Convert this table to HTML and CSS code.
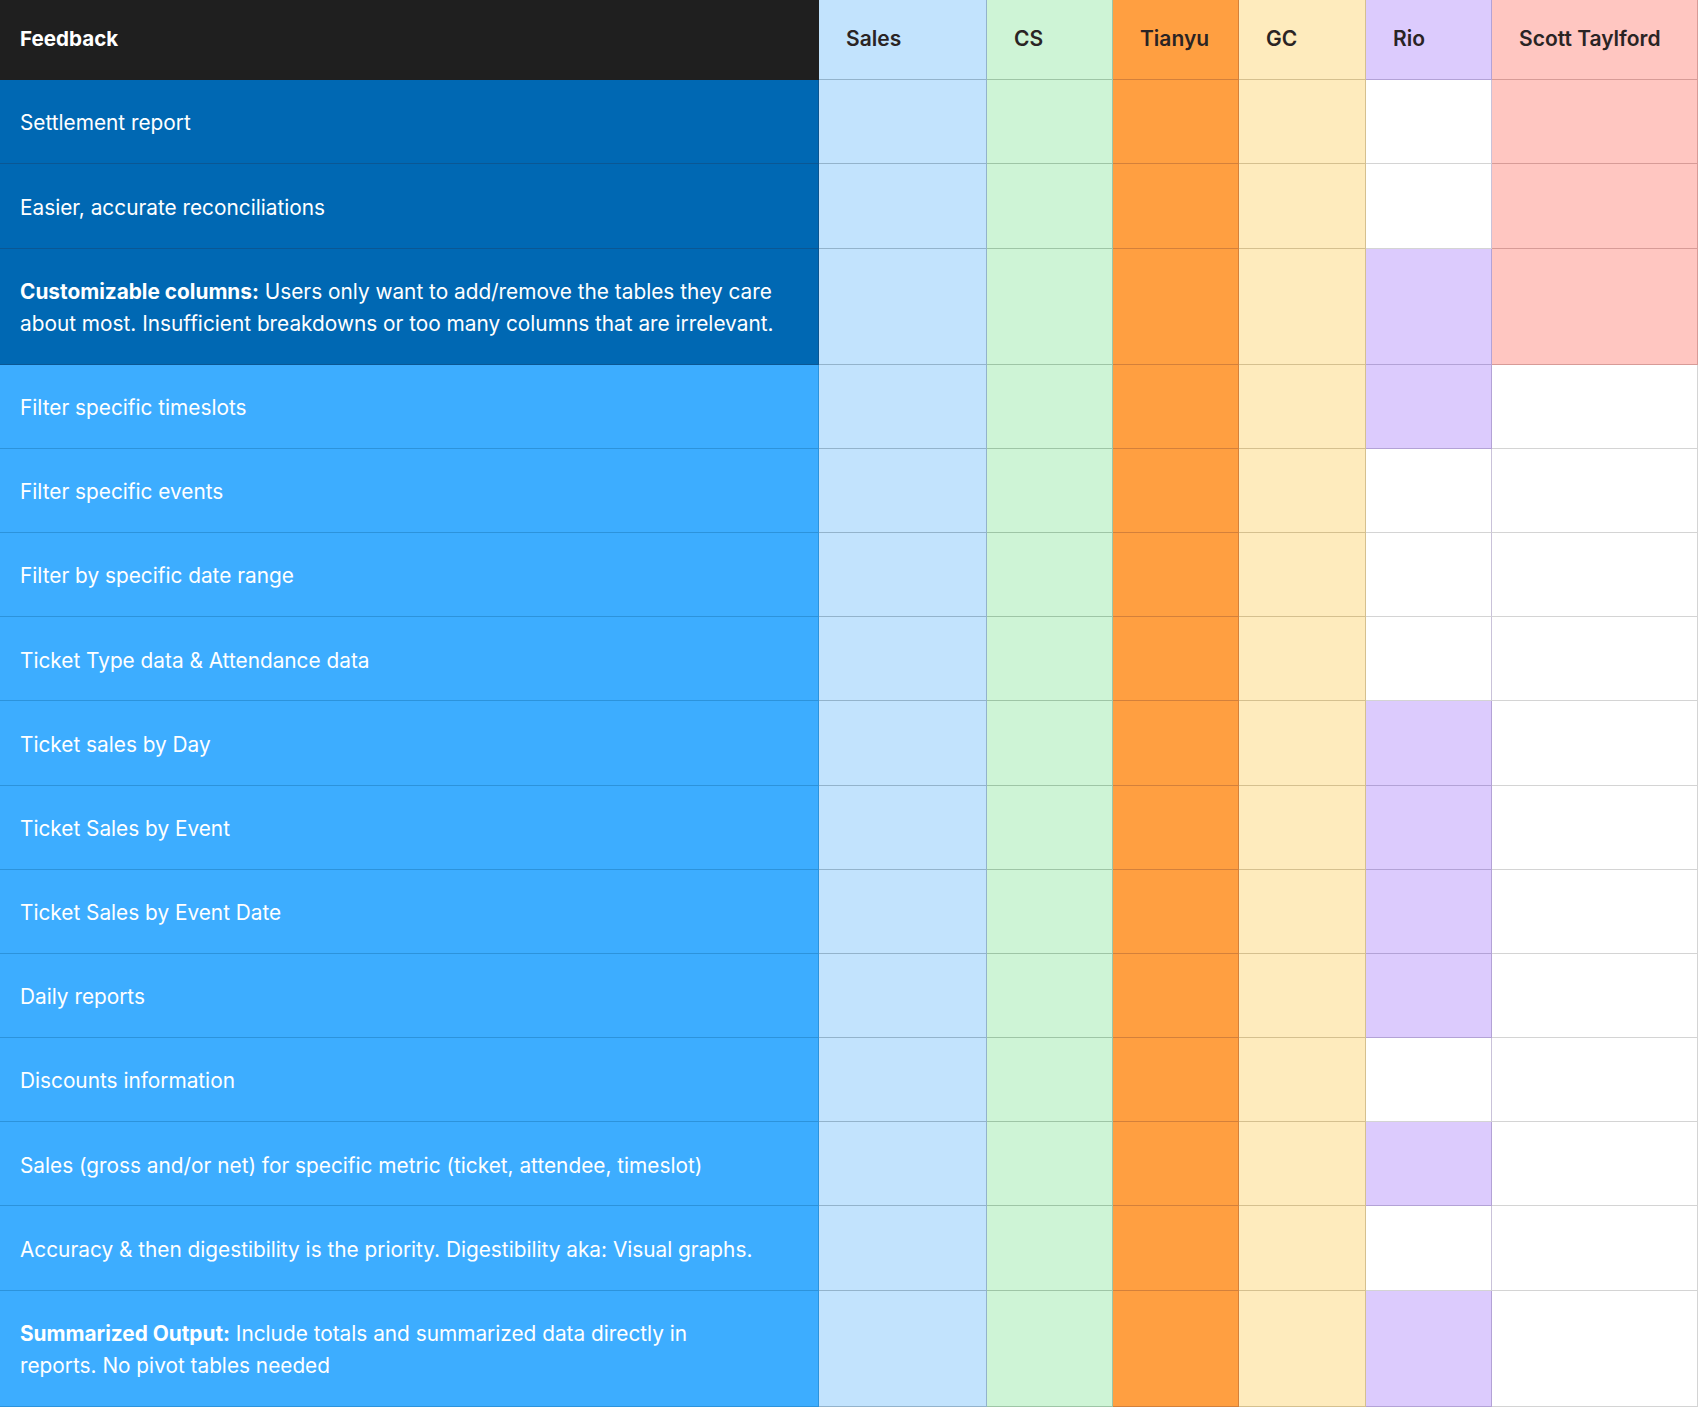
FILE: index.html
```html
<!DOCTYPE html>
<html lang="en">
<head>
<meta charset="utf-8">
<title>Feedback matrix</title>
<link rel="stylesheet" href="styles.css">
</head>
<body>
<div class="grid">
  <div class="cell head fb">Feedback</div>
  <div class="cell head sales">Sales</div>
  <div class="cell head cs">CS</div>
  <div class="cell head tianyu">Tianyu</div>
  <div class="cell head gc">GC</div>
  <div class="cell head rio">Rio</div>
  <div class="cell head scott">Scott Taylford</div>

  <div class="cell fb dark">Settlement report</div>
  <div class="cell sales"></div><div class="cell cs"></div><div class="cell tianyu"></div><div class="cell gc"></div><div class="cell rio off"></div><div class="cell scott"></div>

  <div class="cell fb dark">Easier, accurate reconciliations</div>
  <div class="cell sales"></div><div class="cell cs"></div><div class="cell tianyu"></div><div class="cell gc"></div><div class="cell rio off"></div><div class="cell scott"></div>

  <div class="cell fb dark"><p><b>Customizable columns:</b> Users only want to add/remove the tables they care about most. Insufficient breakdowns or too many columns that are irrelevant.</p></div>
  <div class="cell sales"></div><div class="cell cs"></div><div class="cell tianyu"></div><div class="cell gc"></div><div class="cell rio"></div><div class="cell scott"></div>

  <div class="cell fb">Filter specific timeslots</div>
  <div class="cell sales"></div><div class="cell cs"></div><div class="cell tianyu"></div><div class="cell gc"></div><div class="cell rio"></div><div class="cell scott off"></div>

  <div class="cell fb">Filter specific events</div>
  <div class="cell sales"></div><div class="cell cs"></div><div class="cell tianyu"></div><div class="cell gc"></div><div class="cell rio off"></div><div class="cell scott off"></div>

  <div class="cell fb">Filter by specific date range</div>
  <div class="cell sales"></div><div class="cell cs"></div><div class="cell tianyu"></div><div class="cell gc"></div><div class="cell rio off"></div><div class="cell scott off"></div>

  <div class="cell fb">Ticket Type data &amp; Attendance data</div>
  <div class="cell sales"></div><div class="cell cs"></div><div class="cell tianyu"></div><div class="cell gc"></div><div class="cell rio off"></div><div class="cell scott off"></div>

  <div class="cell fb">Ticket sales by Day</div>
  <div class="cell sales"></div><div class="cell cs"></div><div class="cell tianyu"></div><div class="cell gc"></div><div class="cell rio"></div><div class="cell scott off"></div>

  <div class="cell fb">Ticket Sales by Event</div>
  <div class="cell sales"></div><div class="cell cs"></div><div class="cell tianyu"></div><div class="cell gc"></div><div class="cell rio"></div><div class="cell scott off"></div>

  <div class="cell fb">Ticket Sales by Event Date</div>
  <div class="cell sales"></div><div class="cell cs"></div><div class="cell tianyu"></div><div class="cell gc"></div><div class="cell rio"></div><div class="cell scott off"></div>

  <div class="cell fb">Daily reports</div>
  <div class="cell sales"></div><div class="cell cs"></div><div class="cell tianyu"></div><div class="cell gc"></div><div class="cell rio"></div><div class="cell scott off"></div>

  <div class="cell fb">Discounts information</div>
  <div class="cell sales"></div><div class="cell cs"></div><div class="cell tianyu"></div><div class="cell gc"></div><div class="cell rio off"></div><div class="cell scott off"></div>

  <div class="cell fb">Sales (gross and/or net) for specific metric (ticket, attendee, timeslot)</div>
  <div class="cell sales"></div><div class="cell cs"></div><div class="cell tianyu"></div><div class="cell gc"></div><div class="cell rio"></div><div class="cell scott off"></div>

  <div class="cell fb">Accuracy &amp; then digestibility is the priority. Digestibility aka: Visual graphs.</div>
  <div class="cell sales"></div><div class="cell cs"></div><div class="cell tianyu"></div><div class="cell gc"></div><div class="cell rio off"></div><div class="cell scott off"></div>

  <div class="cell fb"><p><b>Summarized Output:</b> Include totals and summarized data directly in<br>reports. No pivot tables needed</p></div>
  <div class="cell sales"></div><div class="cell cs"></div><div class="cell tianyu"></div><div class="cell gc"></div><div class="cell rio"></div><div class="cell scott off"></div>
</div>
</body>
</html>
```

FILE: styles.css
```css
html, body {
  margin: 0;
  padding: 0;
  background: #ffffff;
}

body {
  font-family: Inter, "Noto Sans", "Liberation Sans", sans-serif;
  overflow: hidden;
}

.grid {
  display: grid;
  grid-template-columns: 819px 168px 126px 126px 127px 126px 1fr;
  grid-template-rows: 80px repeat(2, 84.3px) 116px repeat(11, 84.2px) 116px;
}

.cell {
  box-sizing: border-box;
  display: flex;
  align-items: center;
  border-right: 1px solid transparent;
  border-bottom: 1px solid transparent;
}

.head {
  font-size: 21px;
  font-weight: 600;
  color: #2a2424;
  padding-left: 27px;
  padding-bottom: 2px;
}

.head.fb {
  background: #1f1f1f;
  color: #ffffff;
  font-size: 20.6px;
  font-weight: 700;
  padding: 0 0 2px 20px;
  border-color: #1f1f1f;
}

.fb {
  background: #3dadff;
  border-right-color: #2c93dc;
  border-bottom-color: #2c93dc;
  color: #ffffff;
  font-size: 20.8px;
  padding: 3px 26px 0 20px;
  line-height: 31.5px;
}

.fb.dark {
  background: #0068b3;
  border-right-color: #0a5590;
  border-bottom-color: #0a5794;
}

.fb p {
  margin: 0;
}

.fb b {
  font-weight: 700;
}

.sales {
  background: #c2e3fd;
  border-right-color: #93b3cb;
  border-bottom-color: #93b3cb;
}

.cs {
  background: #cef4d6;
  border-right-color: #9ec5a6;
  border-bottom-color: #9ec5a6;
}

.tianyu {
  background: #ff9f41;
  border-right-color: #d4803a;
  border-bottom-color: #d4803a;
}

.gc {
  background: #feebbd;
  border-right-color: #d5c08f;
  border-bottom-color: #d5c08f;
}

.rio {
  background: #dccbfd;
  border-right-color: #b3a2d6;
  border-bottom-color: #b3a2d6;
}

.scott {
  background: #ffc6c1;
  border-right-color: #d79b97;
  border-bottom-color: #d79b97;
}

.cell.off {
  background: #ffffff;
  border-right-color: #d4d4d4;
  border-bottom-color: #d4d4d4;
}

.rio.off {
  border-right-color: #c9c2d9;
}
```
